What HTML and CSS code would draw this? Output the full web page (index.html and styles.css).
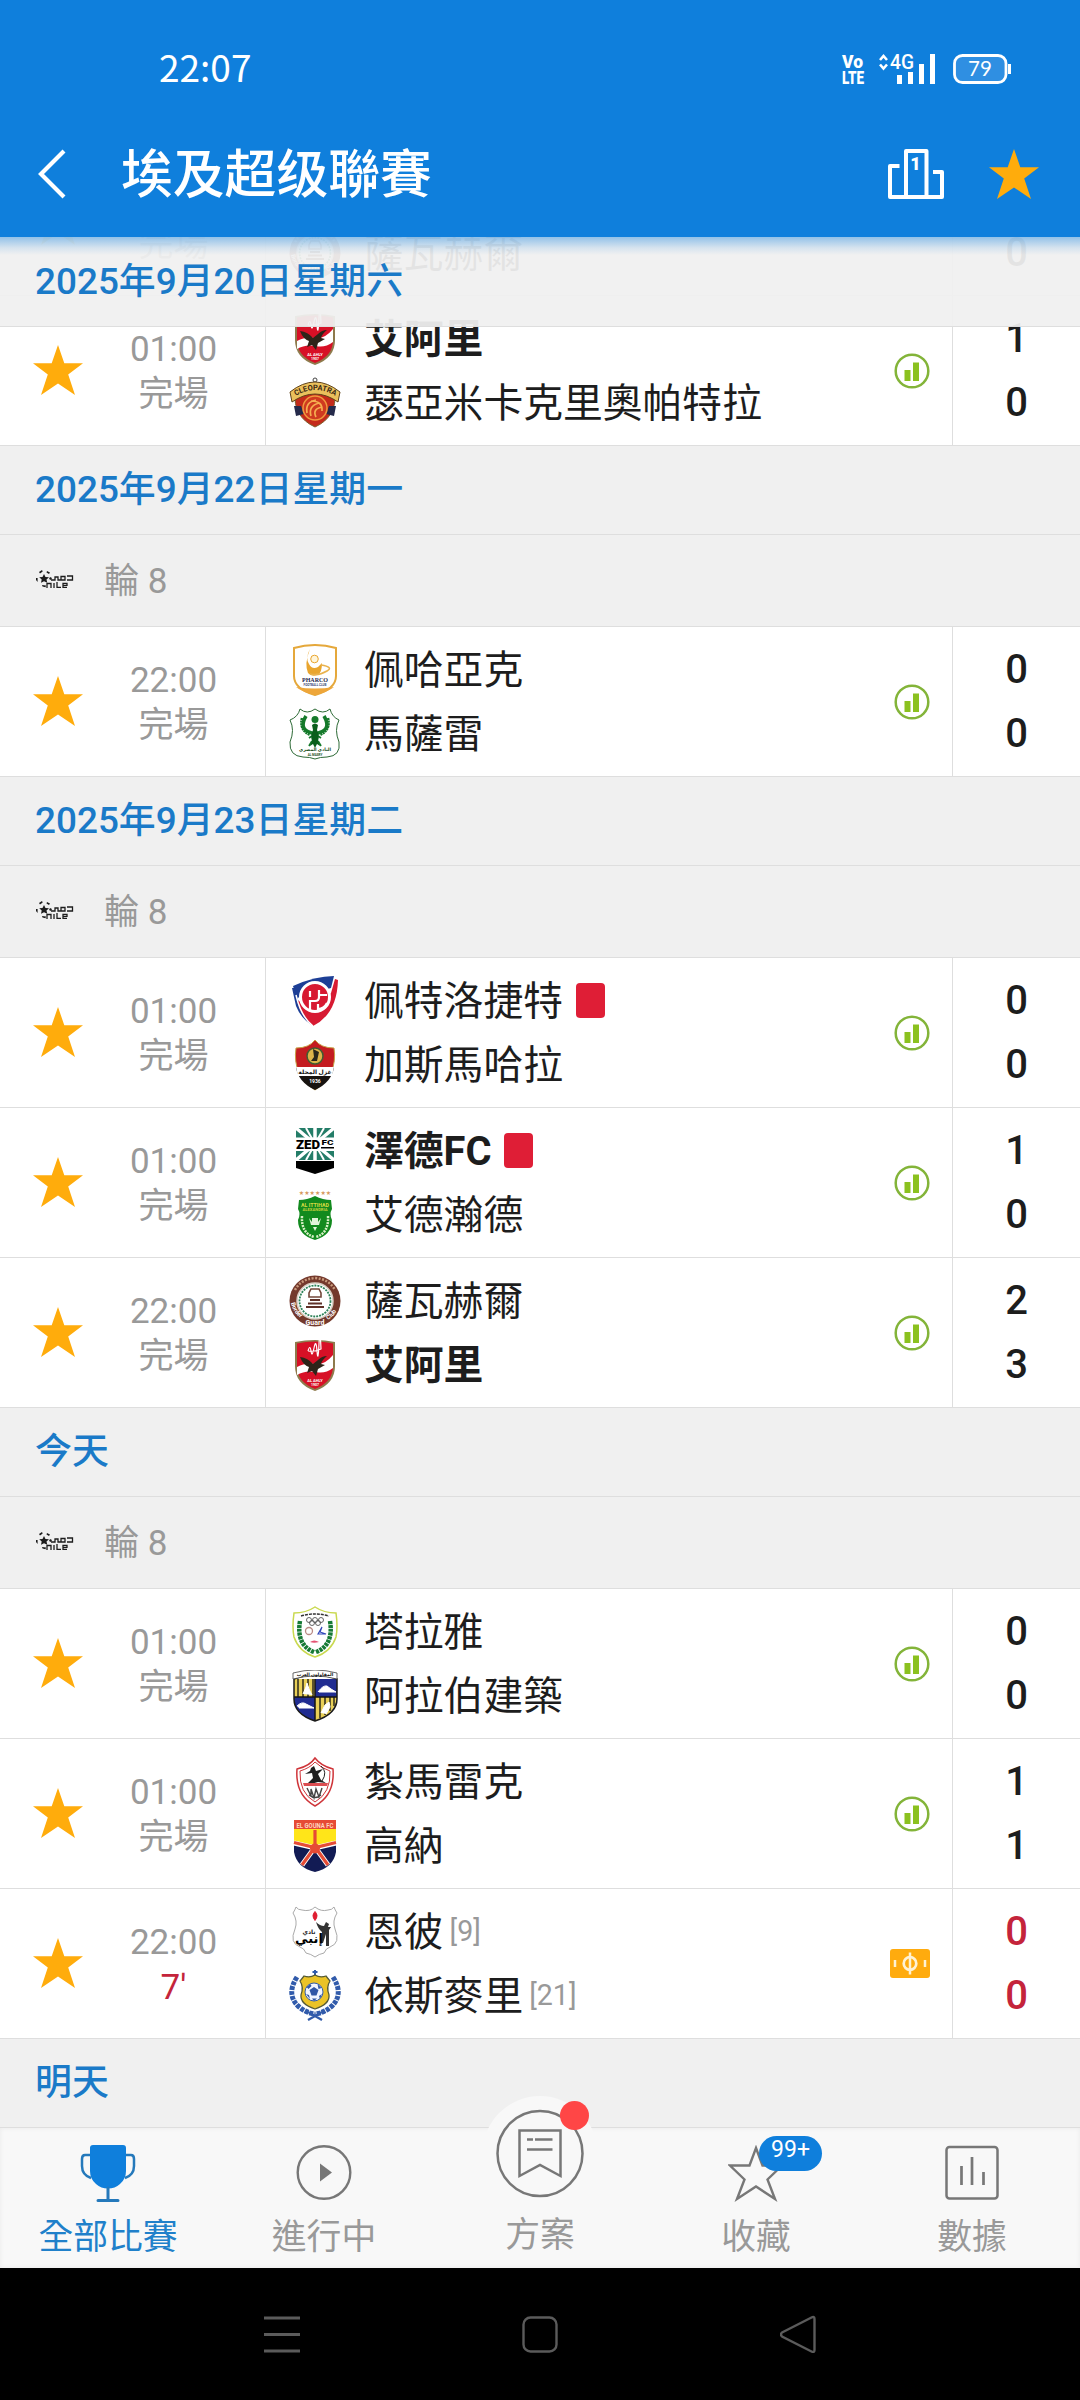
FILE: index.html
```html
<!DOCTYPE html>
<html lang="zh-Hant">
<head>
    <meta charset="UTF-8">
    <meta name="viewport" content="width=device-width, initial-scale=1.0">
    <title>埃及超级聯賽</title>
    <link rel="stylesheet" href="styles.css">
</head>
<body>
    <!-- shared icons and club badges -->
    <svg class="sprite" width="0" height="0">
        <symbol id="star" viewBox="0 0 50 50">
            <path fill="#ffac0c" d="M25 0l6.300 18.200H50L35.200 29.600 42 50 25 38.400 8 50l6.800-20.400L0 18.200h18.700z"/>
        </symbol>
        <symbol id="stats" viewBox="0 0 36 36">
            <circle cx="18" cy="18" r="16.300" fill="#fff" stroke="#83b439" stroke-width="2.500"/>
            <path fill="#8bc11f" d="M10.500 17h6v11h-6zM19 9.500h6V28h-6z"/>
        </symbol>
        <symbol id="pitch" viewBox="0 0 40 29">
            <rect width="40" height="29" rx="3" fill="#ffab0e"/>
            <circle cx="20" cy="14.500" r="6.300" fill="none" stroke="#fff2d4" stroke-width="2.700"/>
            <path stroke="#fff2d4" stroke-width="2.500" d="M20 3.500v22M5 11v7M35 11v7"/>
        </symbol>
        <symbol id="nile" viewBox="0 0 38 20">
            <g fill="#1c1c1c">
                <path d="M8 5l1.500 3 3.500.3-2.500 2.200.8 3.300L8 12.300l-3 1.500.7-3.300L3.200 8.300l3.300-.3z"/>
                <path d="M3 3l3-2 .7 1.600L4 4.500zM11 2l3 1.500-1 1.500-2.500-1.500zM0 9h1.600v4L0 11zM6 16l4 .5-.5 1.800-3-.8zM14 8l2 1-1 2-2-1z"/>
            </g>
            <g fill="none" stroke="#1c1c1c" stroke-width="1.300">
                <path d="M15 11h4V8h3v3h3V7.500h4V11h-4M31 7h5.500v4H31"/>
                <path d="M11 19v-4.500h4V19M18 14v5M21 13v5.300h4M31 18.300h-4v-4h4v2h-4"/>
            </g>
        </symbol>
        <symbol id="ahly" viewBox="0 0 52 52">
            <path d="M6 3q20-4 40 0v24q0 18-20 25Q6 45 6 27z" fill="#8e7a4c"/>
            <path d="M8 4.500q18-4 36 0V27q0 16-18 23Q8 43 8 27z" fill="#d71026"/>
            <path d="M8 28q9-5 17-3 10 2 19-9v13q-8 6-17 4-11-2-19 3z" fill="#fff"/>
            <path d="M11 18q8 1 13 7l5-4q4-4 9-4-5 4-6 8l4 1-7 4-2 7-4-5-5 2 2-6q-6-2-9-10z" fill="#2e2419"/>
            <path d="M19 12q2-7 3 0t3-3 3 3 2-7 2 5q-6 3-13 2" fill="none" stroke="#fff" stroke-width="1.200"/>
            <text x="26" y="43" class="badge-text" font-size="4" fill="#fff">AL AHLY</text>
            <text x="26" y="47" class="badge-text" font-size="3.500" fill="#fff">1907</text>
        </symbol>
        <symbol id="cleopatra" viewBox="0 0 52 52">
            <circle cx="26" cy="3" r="2" fill="none" stroke="#444" stroke-width="1"/>
            <path d="M6 15q20-14 40 0 2 25-20 35Q4 40 6 15z" fill="#c42a1a" stroke="#7e5d2a" stroke-width="1"/>
            <path d="M5 29h7l3 8-8 2zM47 29h-7l-3 8 8 2z" fill="#252a4b"/>
            <circle cx="26" cy="31" r="12" fill="#cf3a20" stroke="#f09a3e" stroke-width="1.500"/>
            <path d="M18 36q-2-11 9-13M22 39q-3-10 8-13M27 40q-4-8 6-10M22 24q12 0 11 10" fill="none" stroke="#f6ae50" stroke-width="1.700"/>
            <path d="M1 15Q26-5 51 15l-2 10Q26 9 3 25z" fill="#eac05c" stroke="#5f4219" stroke-width="1"/>
            <path id="cleoArc" d="M5 20Q26 6 48 20" fill="none"/>
            <text class="badge-text" font-size="7.500" fill="#3b2813"><textPath href="#cleoArc" startOffset="50%">CLEOPATRA</textPath></text>
        </symbol>
        <symbol id="pharco" viewBox="0 0 52 52">
            <path d="M5 4q21-6 42 0v28q0 13-21 19Q5 45 5 32z" fill="#fff" stroke="#e5a83b" stroke-width="2"/>
            <path d="M7 43q19 3 38 0-6 5-19 8-13-3-19-8z" fill="#eea63a"/>
            <path d="M21 5q-5 9-1 15 3 6 9 3 2-2 4-4 0 9-4 12-7 2-10-2-4-9 2-24z" fill="#e9a52e"/>
            <circle cx="25.500" cy="15" r="3.800" fill="#fff5da" stroke="#e9a52e"/>
            <path d="M32 21q13 2 6 6-8 5-17 3" fill="none" stroke="#e9b24d" stroke-width="1.600"/>
            <text x="26" y="38" class="badge-text serif" font-size="6" fill="#25294f">PHARCO</text>
            <text x="26" y="41.500" class="badge-text" font-size="3" fill="#3c4b77">FOOTBALL CLUB</text>
        </symbol>
        <symbol id="masry" viewBox="0 0 52 52">
            <path d="M11 1q7 6 15 0 8 6 15 0 2 8 9 11-5 10 0 22 2 14-12 15-7 0-12 2-5-2-12-2Q0 48 1 34q5-12 0-22 8-3 10-11z" fill="#fff" stroke="#2d6a36" stroke-width="1"/>
            <circle cx="26" cy="11.500" r="3.500" fill="#157a2b"/>
            <g fill="none" stroke="#157a2b">
                <path d="M17 8q-7 12 3 16 4 1 6 3 2-2 6-3 10-4 3-16" stroke-width="3.500"/>
                <path d="M13 10q-3 12 8 17M39 10q3 12-8 17" stroke-width="2.500" stroke-dasharray="2 .6"/>
                <path d="M23 33l-3 5M29 33l3 5M20 30l3-2M32 30l-3-2" stroke-width="1.800"/>
            </g>
            <path d="M23 17q3-3 6 0l-1 5q3 6 1 11l2 5-3-2-2 4-2-4-3 2 2-5q-2-5 1-11z" fill="#0b5e1c"/>
            <text x="26" y="43" class="badge-text" font-size="4.500" fill="#184d22">النادي المصري</text>
            <text x="26" y="48" class="badge-text" font-size="3" fill="#184d22">AL MASRY</text>
        </symbol>
        <symbol id="petrojet" viewBox="0 0 52 52">
            <path d="M4 11Q26 1 45 1l-3 12-34 10z" fill="#1d3f96"/>
            <path d="M3 13l4 18q5 13 17 20Q11 38 6 13z" fill="#1d3f96"/>
            <path d="M46 4l3 1q-1 34-25 46Q11 41 8 25l17 8 17-15z" fill="#d71a32"/>
            <path d="M7 20q5 22 17 31" fill="none" stroke="#fff" stroke-width="1.500"/>
            <circle cx="26" cy="22" r="14.500" fill="#d71a32" stroke="#fff" stroke-width="3"/>
            <path d="M21 35V26h5q4 0 4-4v-7M21 22v-6M30 20h8M38 28q-3 6-9 6v-5" fill="none" stroke="#fff" stroke-width="2.200"/>
        </symbol>
        <symbol id="ghazl" viewBox="0 0 52 52">
            <path d="M7 9q13 0 19-8 6 8 19 8 4 27-19 42Q3 36 7 9z" fill="#c41c20" stroke="#c7a347" stroke-width="1"/>
            <path d="M7 28h38q-2 15-19 23Q9 43 7 28z" fill="#171310"/>
            <path d="M7 28h38l-2 9H9z" fill="#fff"/>
            <circle cx="26" cy="17" r="8" fill="#dcb34a" stroke="#3f5d31" stroke-width="1.500"/>
            <path d="M24 10l6 3-2 9h-6l3-4z" fill="#28251a"/>
            <text x="26" y="35" class="badge-text" font-size="6" fill="#111">غزل المحلة</text>
            <text x="26" y="44" class="badge-text" font-size="5" fill="#fff">1936</text>
        </symbol>
        <symbol id="zed" viewBox="0 0 52 52">
            <path d="M7 3h38v32H7z" fill="#247d68"/>
            <path d="M7 3l38 32M45 3L7 35M26 3v32" stroke="#fff" stroke-width="3.500"/>
            <path d="M17 3l18 32M35 3L17 35" stroke="#fff" stroke-width="2"/>
            <path d="M5 12.500h42V26H5z" fill="#fff"/>
            <path d="M7 36h38v7l-19 6-19-6z" fill="#000"/>
            <text x="7" y="23.800" font-size="12.500" textLength="24" lengthAdjust="spacingAndGlyphs" class="zed-text">ZED</text>
            <text x="32.500" y="20" font-size="8" textLength="12" lengthAdjust="spacingAndGlyphs" class="zed-text">FC</text>
            <path d="M32 22h13v1.500H32z"/>
        </symbol>
        <symbol id="ittihad" viewBox="0 0 52 52">
            <path d="M10 11q8 0 16-4 8 4 16 4l1 9q-3 5 0 11 0 15-17 20Q9 46 9 31q3-6 0-11z" fill="#128a1e"/>
            <text x="26" y="6" class="badge-text" font-size="6" fill="#d69a60">★★★★★★</text>
            <text x="26" y="18" class="badge-text" font-size="6" fill="#d8dc41" textLength="28" lengthAdjust="spacingAndGlyphs">AL ITTIHAD</text>
            <text x="26" y="22" class="badge-text" font-size="3.500" fill="#c5cf3b" textLength="25" lengthAdjust="spacingAndGlyphs">ALEXANDRIA</text>
            <path d="M13 27q-1 17 12 21M39 27q1 17-12 21" fill="none" stroke="#d9f0c7" stroke-width="2.500" stroke-dasharray="2 1"/>
            <path d="M20 29l3 4v-4h6v4l3-4-2 7h-8zM24 38h4l-2 4z" fill="#e1f4d9"/>
        </symbol>
        <symbol id="haras" viewBox="0 0 52 52">
            <circle cx="26" cy="26" r="25.500" fill="#74392c"/>
            <circle cx="26" cy="26" r="18" fill="#fff" stroke="#d8cfc3" stroke-width="1.500"/>
            <circle cx="26" cy="26" r="15.500" fill="none" stroke="#2c8157" stroke-width="1.800" stroke-dasharray="2 1"/>
            <path d="M6 15q6-11 20-12 14 1 20 12" fill="none" stroke="#c89a7c" stroke-width="2.500" stroke-dasharray="2 1.500"/>
            <path d="M22 14h8l2 4v4H20v-4z" fill="none" stroke="#73473a" stroke-width="1.600"/>
            <path d="M21 24h10v2H21zM19 27.500h14v2H19zM17 31h18v2H17z" fill="#5f3128"/>
            <text x="26" y="50" class="badge-text" font-size="7" fill="#fff">Guard</text>
            <path id="harasL" d="M2 28q2 10 12 17" fill="none"/>
            <path id="harasR" d="M39 45q9-6 11-16" fill="none"/>
            <text font-size="6" fill="#fff" class="badge-text left"><textPath href="#harasL">Border</textPath></text>
            <text font-size="6" fill="#fff" class="badge-text left"><textPath href="#harasR">Club</textPath></text>
        </symbol>
        <symbol id="tala" viewBox="0 0 52 52">
            <path d="M5 7q12 0 21-6 9 6 21 6 2 14 0 24-5 15-21 20Q10 46 5 31 3 21 5 7z" fill="#fff" stroke="#c9d94f" stroke-width="1.500"/>
            <path d="M11 15q-4 24 14 31M41 15q4 24-14 31" fill="none" stroke="#167a35" stroke-width="4.500" stroke-dasharray="3 .8"/>
            <path d="M12 10q14-4 28 0" fill="none" stroke="#333" stroke-width="1.500" stroke-dasharray="3 1"/>
            <g fill="none" stroke="#555" stroke-width=".9"><circle cx="20" cy="14" r="2.500"/><circle cx="26" cy="14" r="2.500"/><circle cx="32" cy="14" r="2.500"/><circle cx="23" cy="17" r="2.500"/><circle cx="29" cy="17" r="2.500"/></g>
            <circle cx="20" cy="25" r="3.500" fill="none" stroke="#b98a84" stroke-width="1.300"/>
            <path d="M29 28l4-7-2 5 6 2z" stroke="#3146b9" stroke-width="1.200" fill="none"/>
            <path d="M21 36q4-3 9 0-5 1.500-9 0z" fill="#e55374"/>
        </symbol>
        <symbol id="arab" viewBox="0 0 52 52">
            <path d="M5 9h43v20q0 15-22 22Q5 44 5 29z" fill="#202c91"/>
            <path d="M5 9h21v18H5zM26 27h22q-1 17-22 24z" fill="#e8cf57"/>
            <path d="M9 9v18M14 9v18M19 9v18M24 9v18M31 27v21M36 27v18M41 27v14M45 27v9" stroke="#2d2b1d" stroke-width="1.500"/>
            <path d="M14 24l3-7 1-4 2 6 3 6M29 22q5-7 9-6l4 3 5 3H30M8 36q5-5 9-2l8 4H10M32 43l4-8 4-3 1 5-4 7" fill="#fff" stroke="#fff" stroke-width="1"/>
            <path d="M26 9v42M5 27h43" stroke="#151515" stroke-width="1.500"/>
            <path d="M5 9q21-8 43 0v20q0 15-22 22Q5 44 5 29z" fill="none" stroke="#1a1a1a" stroke-width="1.500"/>
            <path d="M4 3q22-6 44 0v6q-22-6-44 0z" fill="#fff" stroke="#444" stroke-width=".8"/>
            <text x="26" y="6" class="badge-text" font-size="4.500" fill="#111">المقاولون العرب</text>
        </symbol>
        <symbol id="zamalek" viewBox="0 0 52 52">
            <path d="M8 13q13-3 18-11 6 8 18 11 2 26-18 37Q6 39 8 13z" fill="#fff" stroke="#cf3439" stroke-width="1.500"/>
            <path d="M11 15q10-3 15-9 6 6 15 9 1 22-15 31-16-9-15-31z" fill="#fff" stroke="#cf3439" stroke-width="1"/>
            <path d="M22 12l3-2 2 5 7-2-5 5 3 6 5 3-8-1-7 2-3-1 5-5-1-5-7 1 5-3z" fill="#1e1e1e"/>
            <path d="M32 10q7 6 1 15" fill="none" stroke="#222" stroke-width="1"/>
            <path d="M14 27h25l-1 3H15z" fill="#dc4d51"/>
            <path d="M18 32l4 8v-7l3 9 2-9 3 8 3-9M20 39q6 5 12 0" fill="none" stroke="#444" stroke-width="1.400"/>
        </symbol>
        <symbol id="gouna" viewBox="0 0 52 52">
            <path d="M5 0h42v32q-3 16-21 20Q8 48 5 32z" fill="#121b54"/>
            <path d="M5 9h42v13l-21 5-21-5z" fill="#ffe519"/>
            <path d="M26 27L13 45M26 27l13 18M5 23l21 5 21-5" fill="none" stroke="#fff" stroke-width="5"/>
            <path d="M26 10v17M5 22.500l21 5 21-5M26 27L13 45M26 27l13 18" fill="none" stroke="#e64b35" stroke-width="3.200"/>
            <circle cx="26" cy="28.500" r="5" fill="#e64b35"/>
            <path d="M5 0h42v9H5z" fill="#e64b35"/>
            <text x="26" y="7.500" class="badge-text" font-size="7" fill="#ffd4bd" textLength="37" lengthAdjust="spacingAndGlyphs">EL GOUNA FC</text>
        </symbol>
        <symbol id="enppi" viewBox="0 0 52 52">
            <path d="M7 1q2 3 6 3 8 2 13-3 6 5 13 3 4 0 6-3 1 3 3 6-5 8-2 16 6 14-5 18-4 1-6 6-5 1-9 4-4-3-9-4-2-5-6-6-11-4-5-18 3-8-2-16 2-3 3-6z" fill="#fff" stroke="#aaa" stroke-width="1"/>
            <path d="M26 5.500q4 4 0 9-4-5 0-9z" fill="#df1d31" stroke="#df1d31"/>
            <path d="M27 16q4 4 8 4l2-4 3 2-1 3h3l-2 3v16h-3V28l-3 9h-2l1-11q-4-3-6-10z" fill="#333"/>
            <text x="20" y="28" class="badge-text" font-size="6" fill="#222">نادي</text>
            <text x="20" y="37" class="badge-text" font-size="13" fill="#000">إنبي</text>
        </symbol>
        <symbol id="ismaily" viewBox="0 0 52 52">
            <path d="M8 7q-11 17 1 29 8 7 17 8M44 7q11 17-1 29-8 7-17 8" fill="none" stroke="#315bab" stroke-width="5" stroke-dasharray="4 1"/>
            <path d="M19 50l14-8M33 50l-14-8" stroke="#315bab" stroke-width="2.300"/>
            <path d="M26 0v6M23.500 2h5" stroke="#315bab" stroke-width="2"/>
            <path d="M15 6q6 2 11-1 5 3 11 1l4 5q-4 6-1 14 1 9-14 14-15-5-14-14 3-8-1-14z" fill="#ebc327" stroke="#555b38" stroke-width="1.300"/>
            <circle cx="25" cy="22" r="9" fill="#f1f5ff" stroke="#315bab" stroke-width="1"/>
            <path d="M25 17l4.500 3-2 5.500h-5l-2-5.500zM17.500 17l4-3 1 2-3 3zM28.500 14l4 4-3 1zM17 24l3 1 1 4zM30 26l3-2-2 5zM23 28.500h5l-3 2.500z" fill="#3157a6"/>
        </symbol>
    </svg>

    <header>
        <div class="status-bar">
            <span class="clock">22:07</span>
            <svg width="171" height="34" viewBox="841 52 171 34">
                <g fill="#fff">
                    <text x="842" y="68" class="volte" font-size="18" textLength="21" lengthAdjust="spacingAndGlyphs">Vo</text>
                    <text x="842" y="84" class="volte" font-size="19" textLength="22" lengthAdjust="spacingAndGlyphs">LTE</text>
                    <text x="890" y="69" font-size="20.500" font-weight="500" textLength="24" lengthAdjust="spacingAndGlyphs">4G</text>
                    <path d="M897 75h5v9h-5zM908 72h5v12h-5zM919 64h5v20h-5zM930 54h5v30h-5z"/>
                    <path d="M1008 64h3v10h-3z"/>
                </g>
                <path d="M880 60l3.500-4 3.500 4M880 64.500l3.500 4 3.500-4" fill="none" stroke="#fff" stroke-width="2.600"/>
                <rect x="954.500" y="55.500" width="51.500" height="27" rx="8" fill="#2f8fe2" stroke="#fff" stroke-width="2.800"/>
                <text x="980" y="76.300" font-size="20.500" fill="#fff" text-anchor="middle" class="battery">79</text>
            </svg>
        </div>
        <div class="title-bar">
            <svg class="back" width="30" height="50" viewBox="0 0 30 50"><path d="M27 2L4 25l23 23" fill="none" stroke="#fff" stroke-width="4.200"/></svg>
            <h1>埃及超级聯賽</h1>
            <svg class="podium" width="56" height="50" viewBox="0 0 56 50">
                <g fill="none" stroke="#fff" stroke-width="4" stroke-linejoin="round">
                    <path d="M11.500 17H2v31h52V23H45"/>
                    <path d="M18 48V2h20.500v46"/>
                </g>
                <text x="27.500" y="21" font-size="18" font-weight="900" fill="#fff" text-anchor="middle">1</text>
            </svg>
            <svg class="fav" width="50" height="50"><use href="#star"/></svg>
        </div>
    </header>

    <main>
        <h2 class="date sticky">2025年9月20日星期六</h2>
        <div class="list">
            <div class="match">
                <div class="when"><svg class="star"><use href="#star"/></svg><p>01:00<br>完場</p></div>
                <div class="teams">
                    <div class="team"></div>
                    <div class="team"><svg><use href="#haras"/></svg><span>薩瓦赫爾</span></div>
                </div>
                <div class="score"><span></span><span>0</span></div>
            </div>
            <div class="match">
                <div class="when"><svg class="star"><use href="#star"/></svg><p>01:00<br>完場</p></div>
                <div class="teams">
                    <div class="team win"><svg><use href="#ahly"/></svg><span>艾阿里</span></div>
                    <div class="team"><svg><use href="#cleopatra"/></svg><span>瑟亞米卡克里奧帕特拉</span></div>
                </div>
                <svg class="stats"><use href="#stats"/></svg>
                <div class="score"><span>1</span><span>0</span></div>
            </div>

            <h2 class="date">2025年9月22日星期一</h2>
            <div class="round"><svg><use href="#nile"/></svg>輪 8</div>
            <div class="match">
                <div class="when"><svg class="star"><use href="#star"/></svg><p>22:00<br>完場</p></div>
                <div class="teams">
                    <div class="team"><svg><use href="#pharco"/></svg><span>佩哈亞克</span></div>
                    <div class="team"><svg><use href="#masry"/></svg><span>馬薩雷</span></div>
                </div>
                <svg class="stats"><use href="#stats"/></svg>
                <div class="score"><span>0</span><span>0</span></div>
            </div>

            <h2 class="date">2025年9月23日星期二</h2>
            <div class="round"><svg><use href="#nile"/></svg>輪 8</div>
            <div class="match">
                <div class="when"><svg class="star"><use href="#star"/></svg><p>01:00<br>完場</p></div>
                <div class="teams">
                    <div class="team"><svg><use href="#petrojet"/></svg><span>佩特洛捷特</span><i class="red-card"></i></div>
                    <div class="team"><svg><use href="#ghazl"/></svg><span>加斯馬哈拉</span></div>
                </div>
                <svg class="stats"><use href="#stats"/></svg>
                <div class="score"><span>0</span><span>0</span></div>
            </div>
            <div class="match">
                <div class="when"><svg class="star"><use href="#star"/></svg><p>01:00<br>完場</p></div>
                <div class="teams">
                    <div class="team win"><svg><use href="#zed"/></svg><span>澤德FC</span><i class="red-card"></i></div>
                    <div class="team"><svg><use href="#ittihad"/></svg><span>艾德瀚德</span></div>
                </div>
                <svg class="stats"><use href="#stats"/></svg>
                <div class="score"><span>1</span><span>0</span></div>
            </div>
            <div class="match">
                <div class="when"><svg class="star"><use href="#star"/></svg><p>22:00<br>完場</p></div>
                <div class="teams">
                    <div class="team"><svg><use href="#haras"/></svg><span>薩瓦赫爾</span></div>
                    <div class="team win"><svg><use href="#ahly"/></svg><span>艾阿里</span></div>
                </div>
                <svg class="stats"><use href="#stats"/></svg>
                <div class="score"><span>2</span><span>3</span></div>
            </div>

            <h2 class="date">今天</h2>
            <div class="round"><svg><use href="#nile"/></svg>輪 8</div>
            <div class="match">
                <div class="when"><svg class="star"><use href="#star"/></svg><p>01:00<br>完場</p></div>
                <div class="teams">
                    <div class="team"><svg><use href="#tala"/></svg><span>塔拉雅</span></div>
                    <div class="team"><svg><use href="#arab"/></svg><span>阿拉伯建築</span></div>
                </div>
                <svg class="stats"><use href="#stats"/></svg>
                <div class="score"><span>0</span><span>0</span></div>
            </div>
            <div class="match">
                <div class="when"><svg class="star"><use href="#star"/></svg><p>01:00<br>完場</p></div>
                <div class="teams">
                    <div class="team"><svg><use href="#zamalek"/></svg><span>紮馬雷克</span></div>
                    <div class="team"><svg><use href="#gouna"/></svg><span>高納</span></div>
                </div>
                <svg class="stats"><use href="#stats"/></svg>
                <div class="score"><span>1</span><span>1</span></div>
            </div>
            <div class="match live">
                <div class="when"><svg class="star"><use href="#star"/></svg><p>22:00<br><b>7'</b></p></div>
                <div class="teams">
                    <div class="team"><svg><use href="#enppi"/></svg><span>恩彼</span><small>[9]</small></div>
                    <div class="team"><svg><use href="#ismaily"/></svg><span>依斯麥里</span><small>[21]</small></div>
                </div>
                <svg class="pitch"><use href="#pitch"/></svg>
                <div class="score"><span>0</span><span>0</span></div>
            </div>

            <h2 class="date">明天</h2>
        </div>
    </main>

    <nav class="tabs">
        <a class="tab active">
            <svg width="56" height="58" viewBox="0 0 56 58">
                <path d="M10 3q0-3 3-3h30q3 0 3 3v23q0 8-6 13-5 4.500-12 4.500T16 39q-6-5-6-13z" fill="#0f7fdc"/>
                <path d="M10 10H5q-3 0-3 4v7q0 9 9 12M46 10h5q3 0 3 4v7q0 9-9 12" fill="none" stroke="#2579bb" stroke-width="2.500"/>
                <path d="M28 43v11M18 55.500h20" fill="none" stroke="#2579bb" stroke-width="3" stroke-linecap="round"/>
            </svg>
            <span>全部比賽</span>
        </a>
        <a class="tab">
            <svg width="56" height="58" viewBox="0 0 56 58">
                <circle cx="28" cy="27.500" r="26.300" fill="none" stroke="#777" stroke-width="2.400"/>
                <path d="M24 18.500v18l12-9z" fill="#777"/>
            </svg>
            <span>進行中</span>
        </a>
        <a class="tab plan">
            <svg class="bubble" width="116" height="116" viewBox="0 0 116 116">
                <circle cx="58" cy="58.500" r="57.500" fill="#f8f8f8"/>
                <circle cx="58" cy="58.500" r="42.500" fill="none" stroke="#777" stroke-width="2.500"/>
                <path d="M37.500 35.500h41V81L58 70 37.500 81z" fill="none" stroke="#777" stroke-width="2.500"/>
                <path d="M45 44.500h6M53 44.500h17.500M45 54.500h25.500" stroke="#777" stroke-width="2.500"/>
                <circle cx="92.500" cy="20.500" r="14.500" fill="#ff4646"/>
            </svg>
            <span>方案</span>
        </a>
        <a class="tab">
            <svg width="56" height="58" viewBox="0 0 56 58">
                <path d="M28 3l6.500 17.500H54L39.500 34.500 47 54 28 41.500 9 54l7.500-19.500L2 20.500h19.500z" fill="none" stroke="#777" stroke-width="2.400"/>
            </svg>
            <em class="count">99+</em>
            <span>收藏</span>
        </a>
        <a class="tab">
            <svg width="56" height="58" viewBox="0 0 56 58">
                <rect x="2.500" y="2" width="51" height="51.500" rx="3" fill="none" stroke="#777" stroke-width="2.500"/>
                <path d="M17.500 21v19M28 12v28M39.500 27v13" stroke="#777" stroke-width="2.700"/>
            </svg>
            <span>數據</span>
        </a>
    </nav>

    <footer>
        <svg width="36" height="38" viewBox="0 0 36 38"><path d="M0 3h36M0 19.500h36M0 36h36" stroke="#5b5b5b" stroke-width="2.800"/></svg>
        <svg width="36" height="38" viewBox="0 0 36 38"><rect x="1.500" y="2.500" width="33" height="34" rx="7" fill="none" stroke="#5b5b5b" stroke-width="2.400"/></svg>
        <svg width="36" height="38" viewBox="0 0 36 38"><path d="M2 17.500L31.500 2.500q3-1.500 3 1.500v31q0 3-3 1.500L2 21.500q-2-2 0-4z" fill="none" stroke="#5b5b5b" stroke-width="2.400"/></svg>
    </footer>
</body>
</html>
```
FILE: styles.css
```css
:root {
    --blue: #0f7fdc;
    --bg: #f0f0f0;
    --line: #dedede;
    --text: #1d1d1d;
    --muted: #999;
    --red: #c4243b;
}
* {
    box-sizing: border-box;
    margin: 0;
}
body {
    width: 1080px;
    height: 2400px;
    display: flex;
    flex-direction: column;
    font-family: Roboto, "Noto Sans CJK TC", sans-serif;
    color: var(--text);
    background: var(--bg);
    overflow: hidden;
}
.sprite {
    display: none;
}

/* header */
header {
    height: 237px;
    flex: none;
    background: var(--blue);
    color: #fff;
}
.status-bar {
    height: 137px;
    padding: 0 68px 0 159px;
    display: flex;
    align-items: center;
    justify-content: space-between;
}
.clock {
    padding-bottom: 5px;
    font: 37px/40px "Noto Sans CJK TC", sans-serif;
}
.volte {
    font-weight: 900;
}
.battery {
    font-family: Lato, sans-serif;
}
.title-bar {
    height: 74px;
    padding: 0 41px 0 37px;
    display: flex;
    align-items: center;
}
h1 {
    flex: 1;
    margin-left: 54px;
    padding-top: 3px;
    font-size: 51.8px;
    font-weight: 500;
    line-height: 74px;
}
.podium {
    margin-right: 45px;
}

/* match list */
main {
    position: relative;
    flex: 1;
    overflow: hidden;
}
main::before {
    content: '';
    position: absolute;
    z-index: 2;
    top: 0;
    left: 0;
    right: 0;
    height: 18px;
    background: linear-gradient(rgba(15, 127, 220, .42), rgba(15, 127, 220, .12) 60%, rgba(15, 127, 220, 0));
}
.list {
    margin-top: -91px;
}
.date {
    height: 89px;
    padding-left: 35px;
    border-bottom: 1px solid var(--line);
    background: var(--bg);
    color: #1a7ac8;
    font-size: 36.9px;
    font-weight: 500;
    line-height: 88px;
}
.date.sticky {
    position: absolute;
    z-index: 1;
    top: 0;
    left: 0;
    right: 0;
    height: 90px;
    background: rgba(240, 240, 240, .94);
    line-height: 90px;
}
.round {
    height: 92px;
    padding: 0 0 7px 36px;
    display: flex;
    align-items: center;
    gap: 30px;
    border-bottom: 1px solid var(--line);
    color: var(--muted);
    font-size: 35px;
}
.round svg {
    width: 38px;
    height: 20px;
    margin-top: 4px;
}
.match {
    height: 150px;
    display: flex;
    align-items: center;
    background: #fff;
    border-bottom: 1px solid var(--line);
}
.when {
    width: 266px;
    height: 100%;
    padding-left: 32px;
    display: flex;
    align-items: center;
    border-right: 1px solid var(--line);
}
.star {
    width: 50px;
    height: 50px;
    margin: 0 -1px 2px 1px;
}
.when p {
    flex: 1;
    padding-top: 3px;
    text-align: center;
    color: var(--muted);
    font-size: 35px;
    line-height: 45px;
}
.when b {
    color: var(--red);
    font-weight: 400;
}
.teams {
    flex: 1;
    padding-left: 23px;
}
.team {
    height: 64px;
    display: flex;
    align-items: center;
    font-size: 39.8px;
    white-space: nowrap;
}
.team svg {
    width: 52px;
    height: 52px;
    margin-right: 23px;
}
.team span {
    padding-bottom: 6px;
}
.team.win {
    font-weight: 700;
}
.team small {
    margin-left: 6px;
    padding-bottom: 2px;
    color: var(--muted);
    font-size: 28.6px;
}
.red-card {
    width: 29px;
    height: 35px;
    margin-left: 13px;
    border-radius: 4px;
    background: #df1e36;
}
.stats {
    width: 36px;
    height: 36px;
    margin-right: 22px;
}
.pitch {
    width: 40px;
    height: 29px;
    margin-right: 22px;
}
.score {
    width: 128px;
    height: 100%;
    display: flex;
    flex-direction: column;
    justify-content: center;
    border-left: 1px solid var(--line);
    font-size: 40px;
    font-weight: 500;
    line-height: 64px;
    text-align: center;
}
.score span {
    height: 64px;
}
.live .score {
    color: var(--red);
}

/* text inside club badges */
.badge-text {
    font-family: Roboto, "DejaVu Sans", sans-serif;
    font-weight: 700;
    text-anchor: middle;
}
.badge-text.left {
    text-anchor: start;
}
.badge-text.serif {
    font-family: "Liberation Serif", serif;
}
.zed-text {
    font-family: Roboto, sans-serif;
    font-weight: 900;
}

/* bottom tabs */
.tabs {
    position: relative;
    height: 141px;
    flex: none;
    display: grid;
    grid-template-columns: repeat(5, 1fr);
    border-top: 1px solid var(--line);
    background: #f8f8f8;
    box-shadow: inset 0 0 5px rgba(0, 0, 0, .06);
}
.tab {
    position: relative;
    padding-top: 17px;
    display: flex;
    flex-direction: column;
    align-items: center;
    color: var(--muted);
    font-size: 34.8px;
    line-height: 46px;
}
.tab span {
    margin-top: 11px;
}
.tab.active {
    color: #2080ca;
}
.plan .bubble {
    position: absolute;
    top: -33px;
}
.plan span {
    margin-top: 67px;
}
.count {
    position: absolute;
    left: 111px;
    top: 8px;
    width: 63px;
    height: 35px;
    border-radius: 18px;
    background: var(--blue);
    color: #fff;
    font-size: 23px;
    font-style: normal;
    line-height: 27px;
    text-align: center;
}

/* system navigation */
footer {
    height: 132px;
    flex: none;
    padding: 0 264px;
    display: flex;
    align-items: center;
    justify-content: space-between;
    background: #000;
}
```
